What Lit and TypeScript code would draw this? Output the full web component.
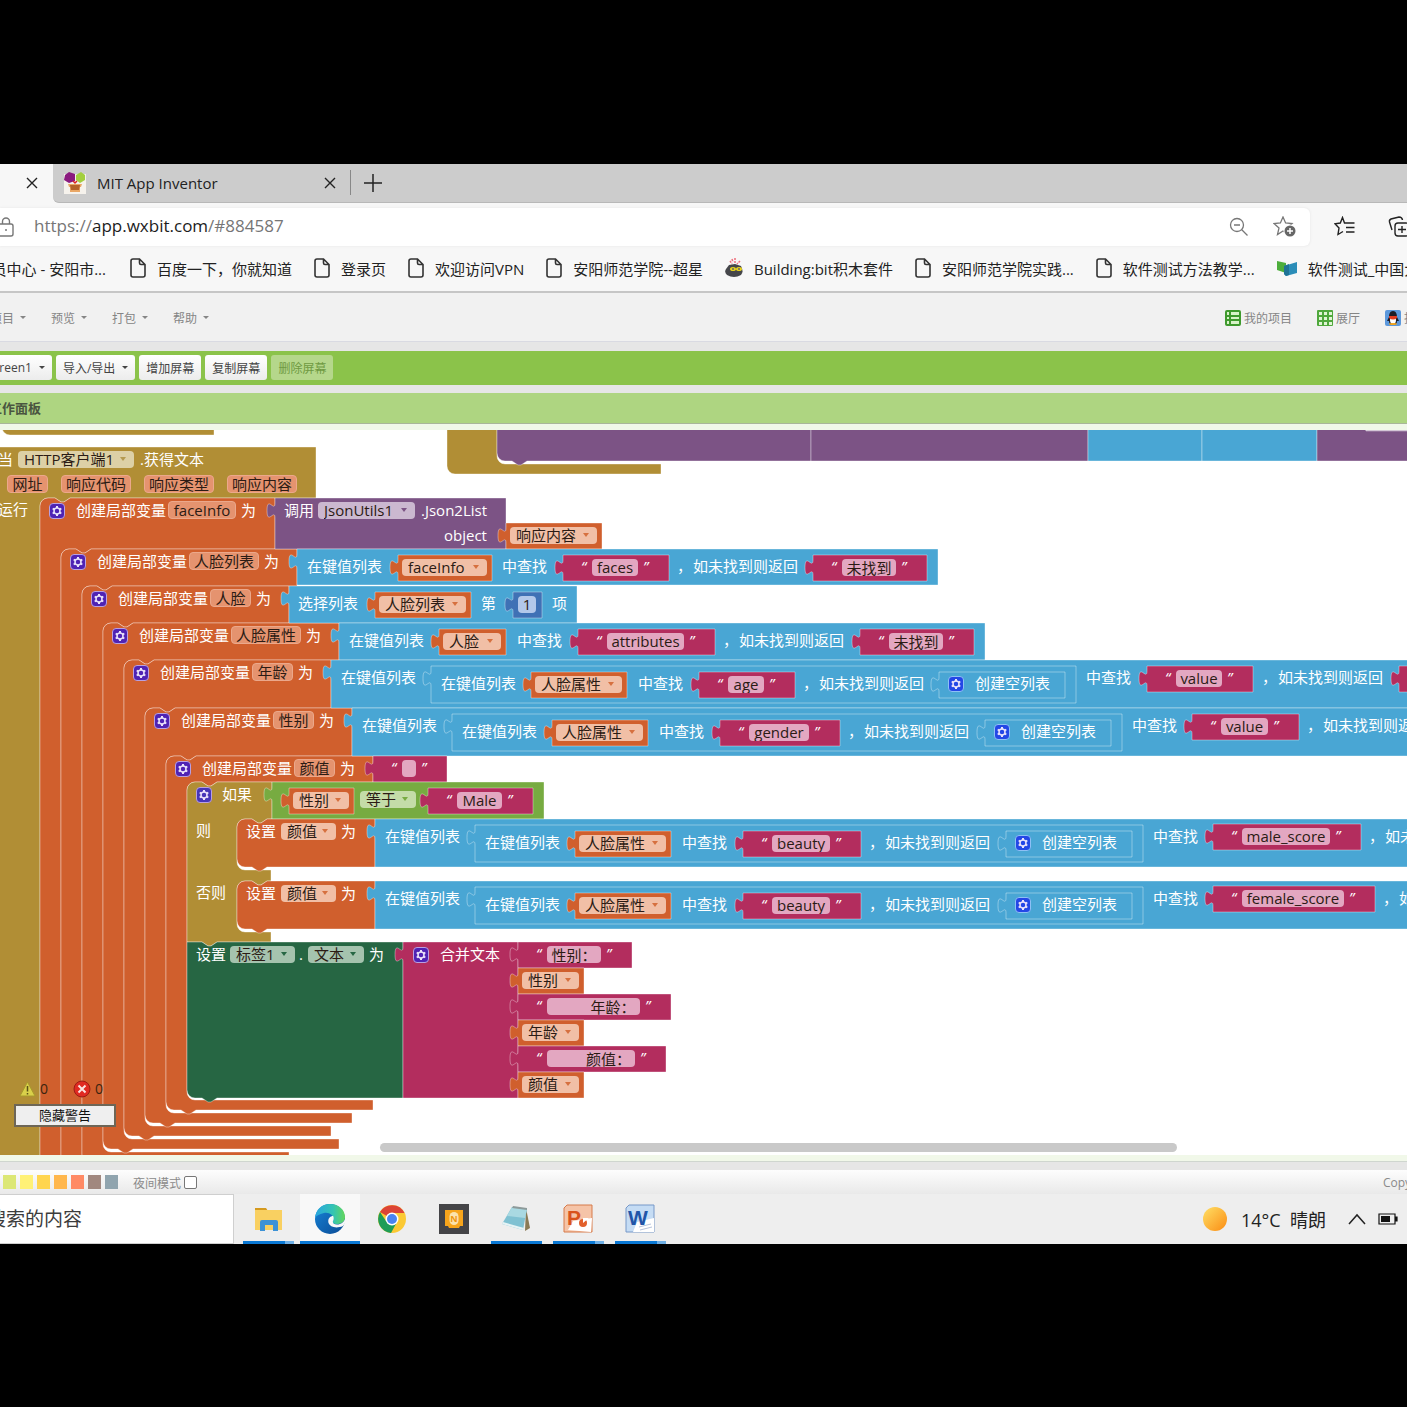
import { LitElement, html, svg, css } from "lit";
import { customElement } from "lit/decorators.js";

/* ---------- shared look ---------- */

const base = css`
  * { box-sizing: border-box; }
  button, input, select {
    font: inherit;
    color: inherit;
    margin: 0;
    padding: 0;
    border: 0;
    background: none;
  }
  button { cursor: pointer; }
  a { color: inherit; text-decoration: none; }
  svg { display: block; flex: none; }
`;

/* ---------- block workspace ---------- */

const GOLD = "#b18e35";
const ORANGE = "#d05f2d";
const BLUE = "#49a6d4";
const PURPLE = "#7c5385";
const PINK = "#b32d5e";
const GREEN = "#77ab41";
const FOREST = "#266643";
const NAVY = "#3f71b5";

type Shape = { d: string; fill: string };
const shapes: Shape[] = [];

/** Value block: a rectangle whose output plug sticks out on the left. */
const value = (x: number, y: number, r: number, h: number, fill: string) =>
  shapes.push({
    fill,
    d: `M${x},${y} H${r} V${y + h} H${x} V${y + 20} c0,-10 -8,8 -8,-7.5 s8,2.5 8,-7.5 Z`,
  });

/** Statement block with a notch on top and a bump below. */
const statement = (x: number, y: number, r: number, b: number, fill: string, roundTop = true) =>
  shapes.push({
    fill,
    d: `M${x},${y + 8} ${roundTop ? "a8,8 0 0 1 8,-8" : "v-8 h8"} H${x + 15} l6,4 h3 l6,-4 H${r} V${b}
        H${x + 30} l-6,4 h-3 l-6,-4 H${x + 8} a8,8 0 0 1 -8,-8 Z`,
  });

/** Inner edge of a statement input that runs from y to b. */
const mouth = (x: number, y: number, b: number, r: number) =>
  `V${y} H${x + 30} l-6,4 h-3 l-6,-4 H${x + 8} a8,8 0 0 0 -8,8 V${b - 8} a8,8 0 0 0 8,8 H${r}`;

type Item =
  | { k: "text"; x: number; y: number; t: string }
  | { k: "quote"; x: number; y: number; t: string }
  | { k: "chip"; x: number; y: number; w: number; t: string }
  | { k: "pick"; x: number; y: number; w: number; t: string; c: string }
  | { k: "edit"; x: number; y: number; w: number; t: string; c: string }
  | { k: "gear"; x: number; y: number; c: string };
const items: Item[] = [];

const text = (x: number, y: number, t: string) => items.push({ k: "text", x, y, t });
const chip = (x: number, y: number, r: number, t: string) => items.push({ k: "chip", x, y, w: r - x, t });
const pick = (x: number, y: number, r: number, t: string, c: string) =>
  items.push({ k: "pick", x, y, w: r - x, t, c });
const gear = (x: number, y: number, c = "violet") => items.push({ k: "gear", x, y, c });

/** Variable getter. */
const getter = (x: number, y: number, r: number, t: string) => {
  value(x, y, r, 26, ORANGE);
  pick(x + 4, y + 4, r - 5, t, "peach");
};

/** Text literal. */
const literal = (x: number, y: number, r: number, t: string) => {
  value(x, y, r, 26, PINK);
  items.push({ k: "quote", x: x + 18, y: y + 13, t: "“" });
  items.push({ k: "edit", x: x + 29, y: y + 4, w: r - x - 60, t, c: "rose" });
  items.push({ k: "quote", x: r - 26, y: y + 13, t: "”" });
};

const NOT_FOUND = "如未找到则返回";

/** Separator and fallback label that follow a key at its right edge. */
const fallback = (right: number, y: number) => {
  text(right + 8, y, "，");
  text(right + 24, y, NOT_FOUND);
};

/** Lookup whose list input is itself a lookup with an empty list as fallback. */
const nestedLookup = (x: number, y: number, b: number, key: string, keyRight: number, end: number) => {
  value(x, y, 1500, b - y, BLUE);
  text(x + 10, y + 17, "在键值列表");
  value(x + 100, y + 6, end, 37, BLUE);
  text(x + 110, y + 23, "在键值列表");
  getter(x + 200, y + 12, x + 296, "人脸属性");
  text(x + 307, y + 23, "中查找");
  literal(x + 368, y + 12, keyRight, key);
  fallback(keyRight, y + 23);
  value(end - 137, y + 12, end - 11, 26, BLUE);
  gear(end - 128, y + 16, "cobalt");
  text(end - 101, y + 23, "创建空列表");
  text(end + 10, y + 17, "中查找");
};

// Stack scrolled above the handler
shapes.push({ fill: GOLD, d: "M2,420 H214 V435 H10 a8,8 0 0 1 -8,-8 Z" });
shapes.push({ fill: GOLD, d: "M447,420 H497 V456 a8,8 0 0 0 8,8 H661 V474 H455 a8,8 0 0 1 -8,-8 Z" });
shapes.push({ fill: PURPLE, d: "M497,420 H811 V461 H527 l-6,4 h-3 l-6,-4 H505 a8,8 0 0 1 -8,-8 Z" });
shapes.push({ fill: PURPLE, d: "M811,420 H1088 V461 H811 Z" });
shapes.push({ fill: BLUE, d: "M1088,420 H1202 V461 H1088 Z" });
shapes.push({ fill: BLUE, d: "M1202,420 H1317 V461 H1202 Z" });
shapes.push({ fill: PURPLE, d: "M1317,420 H1500 V461 H1317 Z" });
shapes.push({ fill: "#cbbace", d: "M1362,420 H1500 V431 H1366 Z" });

// Event handler
shapes.push({ fill: GOLD, d: `M-20,447 H316 ${mouth(40, 498, 1300, 60)} H-20 Z` });
text(-2, 459, "当");
pick(18, 451, 134, "HTTP客户端1", "sand");
text(140, 459, ".获得文本");
chip(7, 475, 48, "网址");
chip(61, 475, 131, "响应代码");
chip(144, 475, 214, "响应类型");
chip(227, 475, 297, "响应内容");
text(-2, 509, "运行");

// Local variable declarations, outermost first
const locals = [
  { y: 498, next: 549, r: 275, name: "faceInfo", w: 68, foot: 1178 },
  { y: 549, next: 586, r: 297, name: "人脸列表", w: 70, foot: 1165 },
  { y: 586, next: 623, r: 289, name: "人脸", w: 41, foot: 1152 },
  { y: 623, next: 660, r: 339, name: "人脸属性", w: 70, foot: 1139 },
  { y: 660, next: 708, r: 331, name: "年龄", w: 41, foot: 1126 },
  { y: 708, next: 756, r: 352, name: "性别", w: 41, foot: 1113 },
  { y: 756, next: 782, r: 373, name: "颜值", w: 41, foot: 1100 },
];
locals.forEach((v, i) => {
  const x = 40 + 21 * i;
  const bottom = v.foot + 10;
  shapes.push({
    fill: ORANGE,
    d: `M${x},${v.y + 8} a8,8 0 0 1 8,-8 h7 l6,4 h3 l6,-4 H${v.r} ${mouth(x + 21, v.next, v.foot, v.r)}
        V${bottom} H${x + 30} l-6,4 h-3 l-6,-4 h-7 a8,8 0 0 1 -8,-8 Z`,
  });
  gear(x + 9, v.y + 5);
  text(x + 36, v.y + 12, "创建局部变量");
  chip(x + 128, v.y + 3, x + 128 + v.w, v.name);
  text(x + 133 + v.w, v.y + 12, "为");
});

value(275, 498, 506, 51, PURPLE);
text(284, 510, "调用");
pick(318, 502, 415, "JsonUtils1", "lilac");
text(421, 510, ".Json2List");
text(444, 535, "object");
getter(506, 523, 602, "响应内容");

value(297, 549, 938, 36, BLUE);
text(307, 566, "在键值列表");
getter(398, 555, 492, "faceInfo");
text(502, 566, "中查找");
literal(563, 555, 669, "faces");
fallback(669, 566);
literal(813, 555, 927, "未找到");

value(289, 586, 577, 37, BLUE);
text(298, 603, "选择列表");
getter(375, 592, 471, "人脸列表");
text(481, 603, "第");
value(513, 592, 542, 26, NAVY);
items.push({ k: "edit", x: 518, y: 596, w: 18, t: "1", c: "ice" });
text(552, 603, "项");

value(339, 623, 985, 37, BLUE);
text(349, 640, "在键值列表");
getter(439, 629, 506, "人脸");
text(517, 640, "中查找");
literal(578, 629, 715, "attributes");
fallback(715, 640);
literal(860, 629, 974, "未找到");

nestedLookup(331, 660, 708, "age", 795, 1076);
literal(1147, 666, 1253, "value");
fallback(1254, 677);
literal(1399, 666, 1500, "");

nestedLookup(352, 708, 756, "gender", 840, 1122);
literal(1192, 714, 1299, "value");
fallback(1299, 725);

literal(373, 756, 447, "");

// Conditional
shapes.push({
  fill: GOLD,
  d: `M187,790 a8,8 0 0 1 8,-8 h7 l6,4 h3 l6,-4 H272 ${mouth(237, 819, 870, 271)}
      ${mouth(237, 881, 932, 271)} V942 H217 l-6,4 h-3 l-6,-4 H187 Z`,
});
gear(196, 787, "indigo");
text(222, 794, "如果");
text(196, 830, "则");
text(196, 892, "否则");
value(272, 782, 544, 37, GREEN);
getter(289, 788, 354, "性别");
pick(360, 791, 416, "等于", "mint");
literal(428, 788, 533, "Male");

const branches = [
  { y: 819, key: "male_score", r: 1361 },
  { y: 881, key: "female_score", r: 1375 },
];
for (const b of branches) {
  statement(237, b.y, 375, b.y + 48, ORANGE);
  text(246, b.y + 12, "设置");
  pick(281, b.y + 4, 336, "颜值", "peach");
  text(341, b.y + 12, "为");
  nestedLookup(375, b.y, b.y + 48, "beauty", 861, 1143);
  literal(1213, b.y + 5, b.r, b.key);
  fallback(b.r, b.y + 17);
}

// Result label
statement(187, 942, 403, 1098, FOREST, false);
text(196, 954, "设置");
pick(230, 946, 295, "标签1", "sage");
text(299, 954, ".");
pick(308, 946, 364, "文本", "sage");
text(369, 954, "为");
value(403, 942, 518, 156, PINK);
gear(413, 947);
text(440, 954, "合并文本");
literal(518, 942, 632, "性别：");
getter(518, 968, 584, "性别");
literal(518, 994, 671, "          年龄：");
getter(518, 1020, 584, "年龄");
literal(518, 1046, 666, "         颜值：");
getter(518, 1072, 584, "颜值");

@customElement("block-workspace")
class BlockWorkspace extends LitElement {
  static styles = [
    base,
    css`
      :host {
        display: block;
        position: relative;
        height: 725px;
        overflow: hidden;
        background: #fff;
        font-size: 15px;
        line-height: 20px;
      }
      /* The scrolled sheet: block coordinates start above the visible area. */
      .sheet { position: absolute; top: -430px; left: 0; width: 100%; height: 1160px; }
      .shapes { position: absolute; inset: 0; width: 100%; height: 100%; }
      .shapes path { stroke: rgba(255, 255, 255, 0.36); stroke-width: 1; }
      .item { position: absolute; white-space: pre; }
      .text { color: #fff; margin-top: -10px; }
      .quote { color: #fff; margin-top: -12px; font-style: italic; }
      .chip, .pick, .edit { height: 18px; line-height: 16px; border-radius: 4px; color: #2b1b14; }
      .chip { background: #e5936f; border: 1px solid #eba88b; text-align: center; }
      .pick { display: flex; align-items: center; padding: 0 8px 0 6px; height: 17px; }
      .pick select { appearance: none; flex: 1; min-width: 0; height: 17px; line-height: 17px; outline: 0; }
      .arrow {
        flex: none;
        border: 3px solid transparent;
        border-top: 4px solid currentColor;
        border-bottom: 0;
        pointer-events: none;
      }
      .edit { height: 17px; text-align: center; padding: 0 2px; outline: 0; }
      .peach { background: #f1bfa6; }
      .peach .arrow { color: #d6703f; }
      .sand { background: #ddd0a6; }
      .sand .arrow { color: #b59a50; }
      .lilac { background: #cbb8d0; }
      .lilac .arrow { color: #7c5385; }
      .mint { background: #c4dca8; }
      .mint .arrow { color: #77ab41; }
      .sage { background: #a5c3ae; }
      .sage .arrow { color: #266643; }
      .rose { background: #e3a7c1; }
      .ice { background: #b3c8ea; }
      .gear {
        width: 16px;
        height: 16px;
        border-radius: 4px;
        display: grid;
        place-items: center;
        border: 1px solid #b9a0e0;
      }
      .violet { background: #4f23b4; }
      .indigo { background: #4636b8; }
      .cobalt { background: #2447e6; border-color: #8dc0f5; }
      .scroll {
        position: absolute;
        left: 27%;
        right: 230px;
        bottom: 3px;
        height: 9px;
        border-radius: 5px;
        background: #c9c9c9;
      }
      .warnings {
        position: absolute;
        left: 14px;
        bottom: 28px;
        display: grid;
        gap: 5px;
        color: #3a2410;
      }
      .counts { display: flex; align-items: center; padding-left: 5px; font-size: 14px; }
      .counts span { display: flex; align-items: center; gap: 4px; width: 54px; height: 20px; }
      .hide {
        width: 102px;
        height: 23px;
        border: 2px solid #6d6657;
        background: #efefef;
        color: #111;
        font-size: 13px;
        line-height: 18px;
      }
    `,
  ];

  private item(i: Item) {
    const at = `left:${i.x}px;top:${i.y}px`;
    switch (i.k) {
      case "text":
        return html`<span class="item text" style=${at}>${i.t}</span>`;
      case "quote":
        return html`<span class="item quote" style=${at}>${i.t}</span>`;
      case "chip":
        return html`<span class="item chip" style="${at};width:${i.w}px">${i.t}</span>`;
      case "pick":
        return html`<span class="item pick ${i.c}" style="${at};width:${i.w}px"
          ><select aria-label=${i.t}><option>${i.t}</option></select><i class="arrow"></i
        ></span>`;
      case "edit":
        return html`<input class="item edit ${i.c}" style="${at};width:${i.w}px" aria-label="文本" .value=${i.t} />`;
      case "gear":
        return html`<button class="item gear ${i.c}" style=${at} aria-label="设置">
          <svg width="12" height="12" viewBox="0 0 12 12" fill="none" stroke="#e9e2fa">
            <circle cx="6" cy="6" r="3" stroke-width="1.500" />
            <path
              stroke-width="2"
              d="M6,3 V1 M6,9 V11 M8.600,4.500 L10.300,3.500 M3.400,7.500 L1.700,8.500 M8.600,7.500 L10.300,8.500 M3.400,4.500 L1.700,3.500"
            />
          </svg>
        </button>`;
    }
  }

  render() {
    return html`
      <div class="sheet">
        <svg class="shapes">${shapes.map((s) => svg`<path d=${s.d} fill=${s.fill}></path>`)}</svg>
        ${items.map((i) => this.item(i))}
      </div>
      <div class="scroll"></div>
      <div class="warnings">
        <div class="counts">
          <span>
            <svg width="17" height="16" viewBox="0 0 17 16">
              <path d="M8.500,1 L16,15 H1 Z" fill="#d9d04a" stroke="#a89a2c" stroke-linejoin="round" />
              <path d="M8.500,5 V10.500 M8.500,12 V13.500" stroke="#5b5218" stroke-width="1.500" />
            </svg>
            0
          </span>
          <span>
            <svg width="18" height="18" viewBox="0 0 18 18">
              <circle cx="9" cy="9" r="8" fill="#e02a22" stroke="#9c1d14" />
              <path d="M5.500,5.500 L12.500,12.500 M12.500,5.500 L5.500,12.500" stroke="#fbe4e0" stroke-width="2" />
            </svg>
            0
          </span>
        </div>
        <button class="hide">隐藏警告</button>
      </div>
    `;
  }
}

/* ---------- icons ---------- */

const closeIcon = html`<svg width="12" height="12" viewBox="0 0 12 12">
  <path d="M1,1 L11,11 M11,1 L1,11" stroke="#222" stroke-width="1.400" />
</svg>`;

const pageIcon = html`<svg width="16" height="20" viewBox="0 0 16 20">
  <path
    d="M3,1 H9.500 L15,6.500 V17 a2,2 0 0 1 -2,2 H3 a2,2 0 0 1 -2,-2 V3 a2,2 0 0 1 2,-2 Z M9.500,1 V5 a1.500,1.500 0 0 0 1.500,1.500 H15"
    fill="none"
    stroke="#333"
    stroke-width="1.600"
  />
</svg>`;

const bombIcon = html`<svg width="18" height="20" viewBox="0 0 18 20">
  <path d="M5,3 L7,6 M10,0 V5 M15,3 L12,6 M7,1 L8,4" stroke="#ee6f7c" stroke-width="1.500" stroke-dasharray="2 1" />
  <path d="M1,11 L4,7 L10,6 L16,8 Q19,14 16,17 Q9,21 2,17 Q-1,14 1,11 Z" fill="#45464a" />
  <ellipse cx="8" cy="11" rx="3" ry="2" fill="#e8d31c" />
  <ellipse cx="14" cy="11" rx="3" ry="2" fill="#e8d31c" />
  <circle cx="8" cy="11" r="1" fill="#666" />
  <circle cx="14" cy="11" r="1" fill="#666" />
</svg>`;

const bookIcon = html`<svg width="20" height="16" viewBox="0 0 20 16">
  <path d="M0,1 L9,3 V13 L0,10 Z" fill="#4dae3c" />
  <path d="M7,6 L20,2 V13 L9,16 L7,14 Z" fill="#2b8db8" />
  <path d="M7,6 L12,4 V15 L9,16 L7,14 Z" fill="#1f7396" />
</svg>`;

const blossomIcon = html`<svg width="22" height="22" viewBox="0 0 22 22">
  <rect y="2" width="22" height="20" fill="#f6f2ec" />
  <path d="M1,3 L5,0 L11,2 L11,9 L5,11 L0,8 Z" fill="#8a1a7f" />
  <path d="M12,3 L17,0 L21,3 L21,8 L16,11 L12,8 Z" fill="#a3cf3e" />
  <path d="M9,9 L11,11 L13,9" fill="none" stroke="#d22" stroke-width="1.500" />
  <path d="M4,12 H18 L17,15 H16 V20 H6 V15 H5 Z" fill="#e9a766" />
  <path d="M6,13 H16 L15,18 H7 Z" fill="#b4622a" />
</svg>`;

const STAR = "M10,1 L12.600,7 L19,7.600 L14,12 L15.500,18.500 L10,15 L4.500,18.500 L6,12 L1,7.600 L7.400,7 Z";

/* ---------- page ---------- */

@customElement("app-root")
class AppRoot extends LitElement {
  static styles = [
    base,
    css`
      :host {
        display: flex;
        flex-direction: column;
        justify-content: center;
        min-height: 100vh;
        background: #000;
        color: #222;
        overflow: hidden;
        font-family: "Open Sans", "Noto Sans CJK SC", sans-serif;
      }
      .row { display: flex; align-items: center; white-space: nowrap; overflow: hidden; }
      .screen { background: #e6e6e6; overflow: hidden; }

      .tabs { height: 39px; background: #f7f7f7; align-items: stretch; }
      .active { width: 53px; display: flex; align-items: center; justify-content: flex-end; padding-right: 15px; }
      .strip {
        flex: 1;
        display: flex;
        align-items: center;
        background: #ccc;
        border-bottom: 1px solid #b8b8b8;
        border-bottom-left-radius: 6px;
        padding-left: 11px;
        font-size: 15px;
      }
      .tabname { width: 238px; padding-left: 11px; }
      .rule { width: 1px; height: 25px; background: #888; margin: 0 13px 0 14px; }

      .address { height: 49px; background: #f7f7f7; }
      .box {
        flex: 1;
        height: 38px;
        display: flex;
        align-items: center;
        background: #fff;
        border-radius: 0 6px 6px 0;
        box-shadow: 0 0 3px #e4e4e4;
        padding-right: 13px;
        gap: 24px;
      }
      .lock { margin-right: -4px; }
      .url { flex: 1; font-size: 17px; line-height: 22px; padding-bottom: 2px; color: #767676; }
      .url b { font-weight: 400; color: #1c1c1c; }
      .tools { display: flex; width: 97px; padding-left: 24px; gap: 32px; }

      .bookmarks {
        height: 41px;
        background: #f7f7f7;
        border-bottom: 2px solid #c6c6c6;
        font-size: 15px;
        gap: 22px;
        padding-bottom: 6px;
      }
      .bookmarks a { display: flex; align-items: center; gap: 11px; flex: none; }
      .bookmarks .cut { width: 108px; padding-right: 2px; justify-content: flex-end; overflow: hidden; }

      .menu {
        height: 49px;
        background: #f1f1f1;
        border-bottom: 1px solid #d9dae2;
        padding-top: 2px;
        font-size: 12px;
        color: #858585;
        gap: 25px;
      }
      .menu button, .tool { display: flex; align-items: center; }
      .menu button { width: 36px; gap: 6px; }
      .menu button:first-child { margin-left: -10px; }
      .menu a { display: flex; align-items: center; gap: 3px; }
      .menu .grow { flex: 1; }
      .links { display: flex; gap: 25px; width: 182px; flex: none; }
      .links a { flex: none; }
      .tri { border: 3px solid transparent; border-top: 3px solid currentColor; border-bottom: 0; flex: none; }

      .toolbar { height: 34px; margin-top: 9px; background: #8bc34a; font-size: 12px; gap: 4px; color: #444; }
      .tool {
        height: 25px;
        padding: 0 7px;
        gap: 7px;
        border-radius: 3px;
        background: linear-gradient(#fff, #ececec);
        flex: none;
      }
      .tool:first-child { margin-left: -20px; }
      .tool:disabled { background: #b5d78b; color: #6f9a42; }
      .panel {
        height: 31px;
        margin-top: 8px;
        background: #aed581;
        border-bottom: 1px solid #a9b69a;
        font-size: 13px;
        font-weight: 600;
        color: #4a5540;
      }
      .panel span { margin-left: -11px; }
      .stage { background: #f1f8e9; padding: 6px 0; border-bottom: 1px solid #cfd6cf; }

      .footer {
        margin-top: 8px;
        height: 24px;
        background: linear-gradient(#fdfdfd, #e9e9e9);
        font-size: 12px;
        color: #8a8a8a;
      }
      .swatches { display: flex; gap: 4px; padding-left: 3px; width: 133px; flex: none; }
      .swatch { width: 13px; height: 14px; }
      .footer label { display: flex; align-items: center; gap: 3px; flex: 1; padding-top: 2px; }
      .footer input { appearance: none; width: 13px; height: 13px; border: 1px solid #777; border-radius: 2px; background: #fff; }
      .copy { width: 24px; flex: none; padding-top: 2px; }

      .taskbar { height: 50px; background: #eee; align-items: stretch; }
      .search {
        width: 234px;
        overflow: hidden;
        background: #fff;
        border: 1px solid #cfcfcf;
        border-left: 0;
        display: flex;
        margin-right: 4px;
        flex: none;
      }
      .search input { width: 340px; flex: none; margin-left: -146px; font-size: 19px; outline: 0; }
      .search input::placeholder { color: #3c3c3c; opacity: 1; }
      .apps { display: flex; gap: 2px; flex: 1; }
      .app {
        width: 60px;
        display: grid;
        place-items: center;
        position: relative;
      }
      .app.current { background: #f8f8f8; }
      .mark { position: absolute; bottom: 0; left: 5px; width: 51px; height: 3px; background: #0a78d4; }
      .current .mark { left: 0; width: 100%; }
      .multi .mark { border-right: 9px solid #6fb0e6; }
      .tray { display: flex; align-items: center; width: 204px; flex: none; font-size: 18px; }
      .tray .sun { margin-right: 14px; }
      .tray .temp { width: 107px; }
      .tray .up { margin-right: 12px; }
    `,
  ];

  private bookmarks: [unknown, string][] = [
    [pageIcon, "百度一下，你就知道"],
    [pageIcon, "登录页"],
    [pageIcon, "欢迎访问VPN"],
    [pageIcon, "安阳师范学院--超星"],
    [bombIcon, "Building:bit积木套件"],
    [pageIcon, "安阳师范学院实践..."],
    [pageIcon, "软件测试方法教学..."],
    [bookIcon, "软件测试_中国大学"],
  ];

  private swatches = ["#dce775", "#fff176", "#ffd54f", "#ffb74d", "#ff8a65", "#a1887f", "#90a4ae"];

  private apps = [
    {
      name: "文件资源管理器",
      cls: "multi",
      mark: true,
      art: svg`<path d="M2,4 h11 l2,3 h-13z" fill="#d59a1f"/><rect x="2" y="6" width="27" height="20" fill="#f9d061"/>
        <path d="M7,27 V18 a2,2 0 0 1 2,-2 H23 a2,2 0 0 1 2,2 V27 H20 V21 H12 V27 Z" fill="#3d92d6"/>`,
    },
    {
      name: "Edge",
      cls: "current",
      mark: true,
      art: svg`<defs><linearGradient id="ea" x1="0" x2="1"><stop stop-color="#2aa5e0"/><stop offset=".6" stop-color="#33c4b4"/><stop offset="1" stop-color="#63d65a"/></linearGradient>
        <linearGradient id="eb" x1="0" y1="0" x2="1" y2="1"><stop stop-color="#1684d8"/><stop offset="1" stop-color="#0b4a94"/></linearGradient></defs>
        <circle cx="15" cy="15" r="15" fill="url(#eb)"/>
        <path d="M0,14 C1,5 7,0 15,0 C24,0 30,6 30,13 C30,18 26,20 22,20 C18,20 17,18 18.500,16 C19,11 14,8 9,9 C4,10 1,12 0,14 Z" fill="url(#ea)"/>
        <path d="M18,12 C15,12 12.500,15 13.500,19 C15,23 21,25 28,22 L29.500,20 C30,19 31,16 30,15 C29,18 26,20.500 22,20.500 C18,20.500 17,18 18.500,16 C19,14 18.500,12.500 18,12 Z" fill="#f8f8f8"/>`,
    },
    {
      name: "Chrome",
      cls: "",
      mark: false,
      art: svg`<circle cx="15" cy="15" r="14" fill="#fbc934"/>
        <path d="M15,15 L3,8 A14,14 0 0 1 27.500,9 L15,9 Z" fill="#dc4436"/>
        <path d="M3,8 A14,14 0 0 0 14,29 L20,18 L9,17 Z" fill="#1e9d57"/>
        <circle cx="15" cy="15" r="6.500" fill="#fff"/><circle cx="15" cy="15" r="5" fill="#4a83f0"/>`,
    },
    {
      name: "App",
      cls: "",
      mark: false,
      art: svg`<rect width="30" height="30" fill="#444447"/><path d="M6,6 H24 V22 H21 L20,24 H10 L9,22 H6 Z" fill="#f7a51c"/>
        <rect x="10.500" y="8" width="9" height="13" rx="4.500" fill="#fbe3ad"/>
        <text x="15" y="18" text-anchor="middle" font-size="9" font-weight="700" fill="#f0960f">N</text>`,
    },
    {
      name: "记事本",
      cls: "",
      mark: true,
      art: svg`<path d="M25,4 L29,24 L24,27 Z" fill="#8a7a55"/><path d="M11,3 L26,5 L22,26 L1,20 Z" fill="#7fc1d2"/>
        <path d="M11,3 L26,5 L24,14 L6,12 Z" fill="#a9d9e2"/><path d="M12,2 L26,4 L26,6 L11,4 Z" fill="#8d9a9a"/>
        <path d="M1,20 L22,26 L23,24 L2,18 Z" fill="#e6f3f5"/>`,
    },
    {
      name: "PowerPoint",
      cls: "multi",
      mark: true,
      art: svg`<path d="M4,1 H29 V28 H1 V4 Z" fill="#f5c4a8" stroke="#d67a4a"/><path d="M10,17 L29,14 L28,28 L5,26 Z" fill="#fff"/>
        <text x="4" y="21" font-family="Liberation Sans" font-size="21" font-weight="700" fill="#d9531c">P</text>
        <circle cx="20" cy="19" r="4" fill="#e2602c"/><path d="M20,19 V14 H26 Z" fill="#fff"/>`,
    },
    {
      name: "Word",
      cls: "multi",
      mark: true,
      art: svg`<path d="M4,1 H29 V28 H1 V4 Z" fill="#c5dcf4" stroke="#7798c8"/><path d="M12,18 L29,14 V28 H8 Z" fill="#fff"/>
        <path d="M14,23 L26,20 M15,26 L27,23" stroke="#b7c4dc"/>
        <text x="3" y="21" font-family="Liberation Sans" font-size="21" font-weight="700" fill="#2055a8">W</text>`,
    },
  ];

  render() {
    return html`
      <main class="screen">
        <div class="row tabs">
          <div class="active"><button aria-label="关闭">${closeIcon}</button></div>
          <div class="strip">
            ${blossomIcon}
            <span class="tabname">MIT App Inventor</span>
            <button aria-label="关闭">${closeIcon}</button>
            <i class="rule"></i>
            <button aria-label="新建标签页">
              <svg width="18" height="18" viewBox="0 0 18 18"><path d="M9,0 V18 M0,9 H18" stroke="#222" stroke-width="1.500" /></svg>
            </button>
          </div>
        </div>

        <div class="row address">
          <div class="box">
            <svg class="lock" width="14" height="20" viewBox="0 0 14 20">
              <path d="M2.500,7 V4.500 a3.500,3.500 0 0 1 7,0 V7" fill="none" stroke="#777" stroke-width="1.400" />
              <rect x="-4" y="7" width="17" height="12" rx="2" fill="none" stroke="#777" stroke-width="1.400" />
              <circle cx="6" cy="13" r="1" fill="#777" />
            </svg>
            <span class="url">https://<b>app.wxbit.com</b>/#884587</span>
            <svg width="20" height="20" viewBox="0 0 20 20" fill="none" stroke="#777" stroke-width="1.300">
              <circle cx="8" cy="8" r="6.500" />
              <path d="M12.800,12.800 L18.500,18.500 M5,8 H11" />
            </svg>
            <svg width="24" height="22" viewBox="0 0 24 22">
              <path d=${STAR} fill="none" stroke="#777" stroke-width="1.300" />
              <circle cx="17" cy="15" r="6.500" fill="#fff" />
              <circle cx="17" cy="15" r="5.500" fill="#666" />
              <path d="M17,12 V18 M14,15 H20" stroke="#fff" stroke-width="1.500" />
            </svg>
          </div>
          <div class="tools">
            <svg width="22" height="20" viewBox="0 0 22 20" fill="none" stroke="#222" stroke-width="1.400">
              <path d="M13,7 L10.500,7 L8.500,1.500 L6.300,7 L1,7.800 L5,12 L4,18.500 L9,15.500 M13,7 H20.500 M12,11.500 H20.500 M12,16 H20.500" />
            </svg>
            <svg width="22" height="22" viewBox="0 0 22 22" fill="none" stroke="#222" stroke-width="1.400">
              <rect x="7" y="7" width="14" height="13" rx="3" />
              <path d="M14,10 V17 M10,13.500 H18 M4,14 L1.500,6 Q1,4 3,3 L11,1 Q14,1 14.500,4" />
            </svg>
          </div>
        </div>

        <nav class="row bookmarks">
          <a class="cut" href="#">会员中心 - 安阳市...</a>
          ${this.bookmarks.map(([icon, name]) => html`<a href="#">${icon}<span>${name}</span></a>`)}
        </nav>

        <div class="row menu">
          ${["项目", "预览", "打包", "帮助"].map((m) => html`<button>${m}<i class="tri"></i></button>`)}
          <span class="grow"></span>
          <div class="links">
            <a href="#">
              <svg width="16" height="16" viewBox="0 0 16 16">
                <rect width="16" height="16" rx="2" fill="#3f9a2e" />
                <path d="M2,2 h2 v3 h-2z M6,2 h8 v3 h-8z M2,7 h2 v2 h-2z M6,7 h8 v2 h-8z M2,11 h2 v3 h-2z M6,11 h8 v3 h-8z" fill="#d8f3c8" />
              </svg>
              我的项目
            </a>
            <a href="#">
              <svg width="16" height="16" viewBox="0 0 16 16">
                <rect width="16" height="16" rx="1" fill="#4fa83c" />
                <path d="M2,2 h3 v3 h-3z M7,2 h3 v3 h-3z M12,2 h3 v3 h-3z M2,7 h3 v3 h-3z M7,7 h3 v3 h-3z M12,7 h3 v3 h-3z M2,12 h3 v3 h-3z M7,12 h3 v3 h-3z M12,12 h3 v3 h-3z" fill="#e0f5d4" />
              </svg>
              展厅
            </a>
            <a href="#">
              <svg width="16" height="16" viewBox="0 0 16 16">
                <rect width="16" height="16" rx="2" fill="#5b98dc" />
                <path d="M8,1 C11,1 12,4 12,7 L14,11 L12,11 Q12,15 8,15 Q4,15 4,11 L2,11 L4,7 C4,4 5,1 8,1 Z" fill="#1c1c28" />
                <ellipse cx="8" cy="10" rx="3" ry="4" fill="#fff" />
                <path d="M4,8 Q8,11 12,8 L12,6 H4 Z" fill="#e23b20" />
                <ellipse cx="8" cy="14" rx="4" ry="1" fill="#f2a51d" />
              </svg>
              指南
            </a>
          </div>
        </div>

        <div class="row toolbar">
          <button class="tool">Screen1<i class="tri"></i></button>
          <button class="tool">导入/导出<i class="tri"></i></button>
          <button class="tool">增加屏幕</button>
          <button class="tool">复制屏幕</button>
          <button class="tool" disabled>删除屏幕</button>
        </div>

        <div class="row panel"><span>工作面板</span></div>
        <div class="stage"><block-workspace></block-workspace></div>

        <div class="row footer">
          <div class="swatches">
            ${this.swatches.map((c) => html`<button class="swatch" aria-label="主题颜色" style="background:${c}"></button>`)}
          </div>
          <label>夜间模式<input type="checkbox" /></label>
          <span class="copy">Copyright</span>
        </div>

        <div class="row taskbar">
          <div class="search"><input type="search" aria-label="搜索" placeholder="在这里输入你要搜索的内容" /></div>
          <div class="apps">
            ${this.apps.map(
              (a) => html`<button class="app ${a.cls}" aria-label=${a.name}>
                <svg width="30" height="30" viewBox="0 0 30 30">${a.art}</svg>
                ${a.mark ? html`<i class="mark"></i>` : ""}
              </button>`
            )}
          </div>
          <div class="tray">
            <svg class="sun" width="24" height="24" viewBox="0 0 24 24">
              <defs>
                <linearGradient id="sun" x1="0" y1="0" x2="1" y2="1">
                  <stop stop-color="#ffe066" />
                  <stop offset="1" stop-color="#fb8c13" />
                </linearGradient>
              </defs>
              <circle cx="12" cy="12" r="12" fill="url(#sun)" />
            </svg>
            <span class="temp">14°C&nbsp; 晴朗</span>
            <svg class="up" width="18" height="12" viewBox="0 0 18 12"><path d="M1,11 L9,2 L17,11" fill="none" stroke="#222" stroke-width="1.500" /></svg>
            <svg width="20" height="12" viewBox="0 0 20 12">
              <path d="M1,1 H17 V11 H1 Z M18,4 h1 v4 h-1z" fill="none" stroke="#111" stroke-width="1.200" />
              <rect x="3" y="3" width="9" height="6" fill="#111" />
            </svg>
          </div>
        </div>
      </main>
    `;
  }
}
